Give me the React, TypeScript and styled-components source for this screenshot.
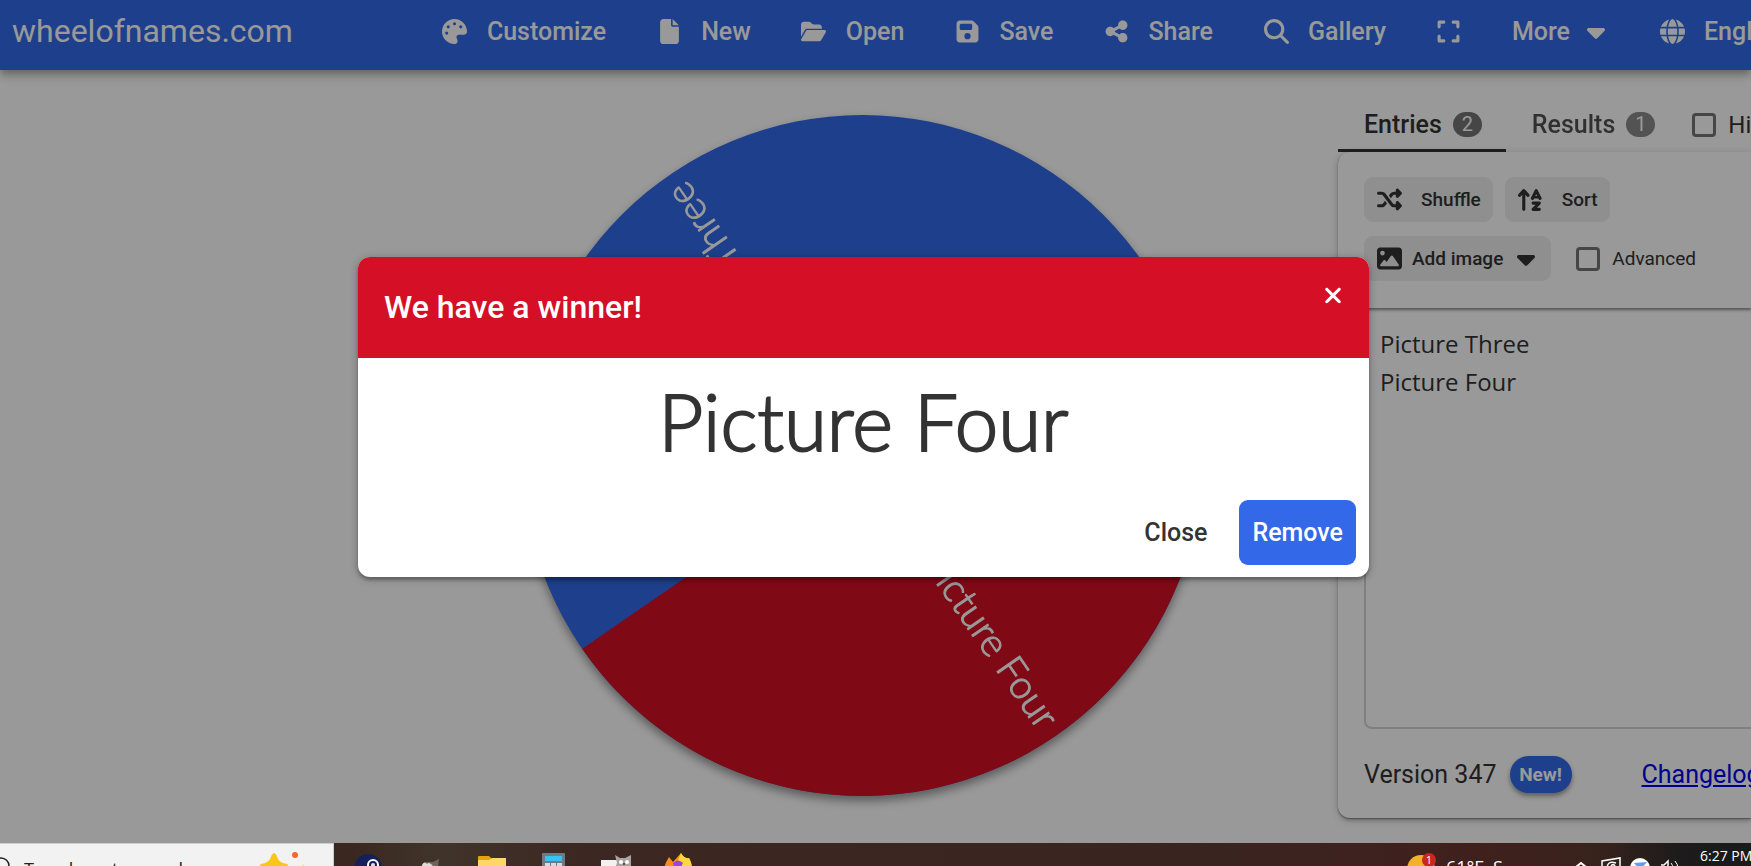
import React from "react";
import styled, { createGlobalStyle } from "styled-components";
import {
  FaPalette, FaFile, FaFolderOpen, FaFloppyDisk, FaShareNodes, FaMagnifyingGlass,
  FaExpand, FaCaretDown, FaGlobe, FaShuffle, FaArrowUpAZ, FaImage, FaXmark,
} from "react-icons/fa6";

const Global = createGlobalStyle`
  *, *::before, *::after { box-sizing: border-box; }
  body { margin: 0; font-family: Roboto, "Liberation Sans", sans-serif; color: #333; background: #fff; }
  button, input, textarea { font: inherit; color: inherit; margin: 0; }
  button { border: 0; background: none; padding: 0; cursor: pointer; white-space: nowrap; }
`;

const Screen = styled.div`
  display: flex;
  flex-direction: column;
  height: 100vh;
  overflow: hidden;
`;

const Page = styled.div`
  position: relative;
  flex: 1;
  min-height: 0;
  display: flex;
  flex-direction: column;
  overflow: hidden;
`;

const Header = styled.header`
  flex: none;
  display: flex;
  align-items: center;
  height: 70px;
  padding: 0 0 8px 12px;
  gap: 124px;
  background: #3369e8;
  color: #fff;
  z-index: 1;
  box-shadow: 0 3px 7px -1px rgba(0, 0, 0, 0.2), 0 6px 8px rgba(0, 0, 0, 0.14), 0 2px 16px rgba(0, 0, 0, 0.12);
`;

const Brand = styled.a`
  flex: none;
  font-size: 32px;
  color: inherit;
  text-decoration: none;
`;

const Nav = styled.nav`
  display: flex;
  flex: none;
`;

const NavButton = styled.button<{ $gap?: number }>`
  display: flex;
  align-items: center;
  gap: ${(p) => p.$gap ?? 19}px;
  padding: 0 25px;
  height: 56px;
  font-size: 25px;
  font-weight: 500;
`;

const IconSlot = styled.span`
  flex: none;
  display: flex;
  align-items: center;
  justify-content: center;
  width: 26px;
  height: 25px;
  svg { flex: none; width: auto; height: 25px; }
`;

const Caret = styled(IconSlot)`
  svg { width: 18px; height: 29px; }
`;

const SortSlot = styled(IconSlot)`
  svg { height: 28px; }
`;

const Main = styled.main`
  flex: 1;
  min-height: 0;
  display: grid;
  grid-template-columns: 389px minmax(0, 1fr) 413px;
`;

const WheelArea = styled.section`
  grid-column: 2;
  display: flex;
  align-items: center;
  justify-content: center;
  min-width: 0;
  padding: 0 2px 2px 0;
`;

const WheelSvg = styled.svg`
  width: 681px;
  height: 681px;
  flex: none;
  overflow: visible;
  filter: drop-shadow(0 5px 5px rgba(0, 0, 0, 0.4));
  text {
    font-family: Lato, sans-serif;
    font-weight: 300;
    font-size: 39px;
    fill: #fff;
    stroke: #fff;
    stroke-width: 1px;
    text-anchor: end;
    dominant-baseline: central;
  }
`;

const Side = styled.aside`
  grid-column: 3;
  display: flex;
  flex-direction: column;
  padding: 27px 0 25px;
  min-height: 0;
`;

const Tabs = styled.div`
  display: flex;
  flex: none;
  height: 55px;
`;

const Tab = styled.button<{ $active?: boolean }>`
  flex: none;
  display: flex;
  align-items: center;
  gap: 11px;
  padding: 2px 24px 0 26px;
  font-size: 25px;
  font-weight: 500;
  border-bottom: 3px solid ${(p) => (p.$active ? "#333" : "transparent")};
  opacity: ${(p) => (p.$active ? 1 : 0.85)};
`;

const Badge = styled.span`
  min-width: 29px;
  height: 25px;
  border-radius: 13px;
  background: #767676;
  color: #fff;
  font-size: 20px;
  line-height: 25px;
  font-weight: 400;
  text-align: center;
`;

const CheckLabel = styled.label<{ $size: number }>`
  flex: none;
  display: flex;
  align-items: center;
  gap: 12px;
  font-size: ${(p) => p.$size}px;
  white-space: nowrap;
  padding-left: 13px;
  input {
    appearance: none;
    width: 24px;
    height: 24px;
    border: 3px solid #757575;
    border-radius: 4px;
  }
`;

const Card = styled.div`
  flex: 1;
  min-height: 0;
  display: flex;
  flex-direction: column;
  border-radius: 12px 0 0 12px;
  box-shadow: 0 2px 8px rgba(0, 0, 0, 0.2), 0 3px 3px rgba(0, 0, 0, 0.14), 0 1px 1px rgba(0, 0, 0, 0.3);
  background: #fff;
`;

const Toolbar = styled.div`
  flex: none;
  display: flex;
  flex-direction: column;
  gap: 14px;
  padding: 25px 26px 27px;
  border-radius: 12px 0 0 0;
  box-shadow: 0 2px 3px rgba(0, 0, 0, 0.45);
  clip-path: inset(0 0 -8px 0);
`;

const ToolRow = styled.div`
  display: flex;
  gap: 12px;
`;

const ToolButton = styled.button<{ $gap: number }>`
  display: flex;
  align-items: center;
  gap: ${(p) => p.$gap}px;
  height: 45px;
  padding: 0 12px;
  border-radius: 9px;
  background: #eee;
  font-size: 19px;
  font-weight: 500;
`;

const Entries = styled.textarea`
  flex: 1;
  min-height: 0;
  margin: 2px 0 0 26px;
  padding: 15px 14px;
  border: 2px solid #d4d4d4;
  border-width: 0 0 2px 2px;
  border-radius: 0 0 0 8px;
  background: transparent;
  resize: none;
  outline: 0;
  font-family: "Open Sans", sans-serif;
  font-size: 24px;
  line-height: 38px;
`;

const Footer = styled.footer`
  flex: none;
  display: flex;
  align-items: center;
  height: 89px;
  padding: 1px 0 0 26px;
  font-size: 25px;
  white-space: nowrap;
  overflow: hidden;
  a { color: #00e; margin-left: 70px; }
`;

const NewPill = styled.button`
  flex: none;
  margin-left: 13px;
  width: 62px;
  height: 37px;
  border-radius: 19px;
  background: #3369e8;
  color: #fff;
  font-size: 19px;
  font-weight: 700;
  box-shadow: 0 3px 5px rgba(0, 0, 0, 0.4);
`;

const Backdrop = styled.div`
  position: absolute;
  inset: 0;
  z-index: 2;
  display: flex;
  align-items: center;
  justify-content: center;
  padding: 0 24px 9px 0;
  background: rgba(0, 0, 0, 0.4);
`;

const Dialog = styled.div`
  width: 1011px;
  max-width: 90%;
  border-radius: 12px;
  overflow: hidden;
  background: #fff;
  box-shadow: 0 2px 8px rgba(0, 0, 0, 0.3), 0 3px 3px rgba(0, 0, 0, 0.2);
`;

const DialogHead = styled.div`
  display: flex;
  align-items: center;
  justify-content: space-between;
  height: 101px;
  padding: 0 26px 2px;
  background: #d50f25;
  color: #fff;
  h2 { margin: 0; font-size: 32px; font-weight: 500; }
  button { align-self: flex-start; display: flex; padding-top: 26px; }
  svg { height: 25px; width: 20px; }
`;

const Winner = styled.div`
  height: 142px;
  padding-top: 13px;
  text-align: center;
  font-family: Lato, sans-serif;
  font-weight: 300;
  font-size: 78px;
  line-height: 100px;
  -webkit-text-stroke: 2px #333;
`;

const DialogActions = styled.div`
  display: flex;
  justify-content: flex-end;
  gap: 14px;
  padding: 0 13px 12px;
`;

const ActionButton = styled.button<{ $primary?: boolean }>`
  height: 65px;
  padding: 0 ${(p) => (p.$primary ? 13 : 18)}px;
  border-radius: 9px;
  font-size: 25px;
  font-weight: 500;
  background: ${(p) => (p.$primary ? "#3369e8" : "transparent")};
  color: ${(p) => (p.$primary ? "#fff" : "#333")};
`;

const Taskbar = styled.div`
  flex: none;
  display: flex;
  align-items: flex-start;
  height: 23px;
  overflow: hidden;
  color: #fff;
  background: linear-gradient(90deg, #3a2720 0, #3a2720 20%, #40342a 25%, #3c2722 33%, #3a2420 70%, #40201d 84%, #38231c 91%, #1d1b1b 96%, #1a1a1a 100%);
`;

const SearchBox = styled.label`
  flex: none;
  display: flex;
  width: 334px;
  height: 62px;
  border: solid #ccc;
  border-width: 1px 1px 0 0;
  background: #f2f2f2;
  color: #222;
  overflow: hidden;
  input {
    width: 200px;
    height: 29px;
    margin-top: 10px;
    padding: 0;
    border: 0;
    background: none;
    font-family: "Open Sans", sans-serif;
    font-size: 18px;
  }
  input::placeholder { color: #222; opacity: 1; }
  svg { flex: none; }
`;

const Pinned = styled.div`
  display: flex;
  margin-left: 3px;
`;

const PinnedApp = styled.button`
  width: 62px;
  display: flex;
  justify-content: center;
`;

const Tray = styled.div`
  display: flex;
  flex: none;
  margin-left: auto;
  font-family: "Open Sans", sans-serif;
  font-size: 16px;
  line-height: 22px;
  white-space: nowrap;
`;

const Weather = styled.span`
  display: flex;
  width: 162px;
  gap: 8px;
  font-size: 18px;
  span { padding-top: 13px; }
`;

const Clock = styled.span`
  width: 51px;
  padding-top: 2px;
  margin-left: 16px;
  font-size: 14px;
`;

const TrayIcons = styled.svg`
  flex: none;
`;

const NAV = [
  { icon: FaPalette, label: "Customize" },
  { icon: FaFile, label: "New" },
  { icon: FaFolderOpen, label: "Open" },
  { icon: FaFloppyDisk, label: "Save" },
  { icon: FaShareNodes, label: "Share" },
  { icon: FaMagnifyingGlass, label: "Gallery" },
];

function Wheel() {
  return (
    <WheelSvg viewBox="-341 -341 682 682" role="img" aria-label="Wheel">
      <circle r="341" fill="#3369e8" />
      <g transform="rotate(55.4)">
        <path d="M0 -341 A341 341 0 0 1 0 341 Z" fill="#d50f25" />
        <text x="328" y="-3">Picture Four</text>
      </g>
      <g transform="rotate(235.4)">
        <text x="328" y="-3">Picture Three</text>
      </g>
      <circle r="60" fill="#fff" />
    </WheelSvg>
  );
}

const APPS = [
  {
    name: "Steam",
    art: (
      <>
        <circle cx="14" cy="25" r="14" fill="#15205a" />
        <circle cx="19" cy="22" r="5" fill="none" stroke="#fff" strokeWidth="2" />
        <circle cx="19" cy="22" r="2" fill="#dde" />
        <path d="M15 24 L8 34" stroke="#fff" strokeWidth="4" />
      </>
    ),
  },
  {
    name: "GIMP",
    art: (
      <>
        <path d="M5 24 L8 19 L17 19 L23 16 L22 24 Z" fill="#68665e" />
        <path d="M6 22 Q8 18 11 21 Q13 18 17 23 L17 25 L6 25Z" fill="#ddd" />
      </>
    ),
  },
  {
    name: "File Explorer",
    art: (
      <>
        <path d="M0 14 Q0 13 1 13 H11 L14 16 V30 H0Z" fill="#e5a50a" />
        <path d="M0 17 H11 L14 15 H28 V32 H0Z" fill="#ffd766" />
      </>
    ),
  },
  {
    name: "Calculator",
    art: (
      <>
        <rect x="2" y="10" width="23" height="24" rx="1" fill="#6f7a84" />
        <rect x="5" y="13" width="17" height="5" fill="#35c4f2" />
        <path d="M5 20h5v6h-5z M11 20h5v6h-5z M17 20h5v6h-5z" fill="#d5dadd" />
      </>
    ),
  },
  {
    name: "Image editor",
    art: (
      <>
        <rect x="-1" y="17" width="22" height="14" fill="#f2f0f0" />
        <path d="M13 12 L18 15 H23 L29 12 V30 H11 L15 20Z" fill="#a8a4a2" />
        <circle cx="19" cy="19" r="2" fill="#fff" />
        <circle cx="25" cy="19" r="2" fill="#fff" />
        <circle cx="22" cy="21" r="1" fill="#5b2b20" />
      </>
    ),
  },
  {
    name: "Firefox",
    art: (
      <>
        <path d="M0 26 Q1 20 5 14 L9 19 L17 10 Q20 16 25 15 Q28 20 28 26Z" fill="#ff8a1e" />
        <path d="M14 17 L17 10 Q20 16 25 15 Q28 20 28 26 H20Z" fill="#ffd83c" />
        <path d="M9 20 Q14 15 19 20 L17 24 H10Z" fill="#9a45e0" />
      </>
    ),
  },
];

export default function App() {
  return (
    <Screen>
      <Global />
      <Page>
        <Header>
          <Brand href="#">wheelofnames.com</Brand>
          <Nav>
            {NAV.map(({ icon: Icon, label }) => (
              <NavButton key={label}>
                <IconSlot><Icon /></IconSlot>
                {label}
              </NavButton>
            ))}
            <NavButton aria-label="Fullscreen">
              <IconSlot><FaExpand /></IconSlot>
            </NavButton>
            <NavButton $gap={13}>
              More
              <Caret><FaCaretDown /></Caret>
            </NavButton>
            <NavButton>
              <IconSlot><FaGlobe /></IconSlot>
              English
            </NavButton>
          </Nav>
        </Header>

        <Main>
          <WheelArea><Wheel /></WheelArea>
          <Side>
            <Tabs>
              <Tab $active>Entries <Badge>2</Badge></Tab>
              <Tab>Results <Badge>1</Badge></Tab>
              <CheckLabel $size={24}>
                <input type="checkbox" />
                Hide
              </CheckLabel>
            </Tabs>
            <Card>
              <Toolbar>
                <ToolRow>
                  <ToolButton $gap={19}><IconSlot><FaShuffle /></IconSlot>Shuffle</ToolButton>
                  <ToolButton $gap={19}><SortSlot><FaArrowUpAZ /></SortSlot>Sort</ToolButton>
                </ToolRow>
                <ToolRow>
                  <ToolButton $gap={10}>
                    <IconSlot><FaImage /></IconSlot>
                    Add image
                    <Caret><FaCaretDown /></Caret>
                  </ToolButton>
                  <CheckLabel $size={19}>
                    <input type="checkbox" />
                    Advanced
                  </CheckLabel>
                </ToolRow>
              </Toolbar>
              <Entries aria-label="Entries" spellCheck={false} defaultValue={"Picture Three\nPicture Four"} />
              <Footer>
                Version 347
                <NewPill>New!</NewPill>
                <a href="#changelog">Changelog</a>
              </Footer>
            </Card>
          </Side>
        </Main>

        <Backdrop>
          <Dialog role="dialog" aria-labelledby="winner-title">
            <DialogHead>
              <h2 id="winner-title">We have a winner!</h2>
              <button aria-label="Dismiss"><FaXmark /></button>
            </DialogHead>
            <Winner>Picture Four</Winner>
            <DialogActions>
              <ActionButton>Close</ActionButton>
              <ActionButton $primary>Remove</ActionButton>
            </DialogActions>
          </Dialog>
        </Backdrop>
      </Page>

      <Taskbar>
        <SearchBox>
          <svg width="24" height="40" viewBox="0 0 24 40" aria-hidden="true">
            <circle cx="1" cy="22" r="8" fill="none" stroke="#222" strokeWidth="1.5" />
          </svg>
          <input type="search" placeholder="Type here to search" />
          <svg width="90" height="40" viewBox="0 0 90 40" aria-hidden="true">
            <path d="M50 9 Q52 9 54 15 Q56 19 63 20 Q66 22 62 27 H38 Q34 22 37 20 Q44 19 46 15 Q48 9 50 9Z" fill="#fbc618" />
            <circle cx="71" cy="11" r="3" fill="#f7682a" />
            <path d="M77 25 L79 20 L81 25Z" fill="#f9d65c" />
          </svg>
        </SearchBox>
        <Pinned>
          {APPS.map((app) => (
            <PinnedApp key={app.name} aria-label={app.name}>
              <svg width="28" height="40" viewBox="0 0 28 40" overflow="visible">{app.art}</svg>
            </PinnedApp>
          ))}
        </Pinned>
        <Tray>
          <Weather>
            <svg width="30" height="40" viewBox="0 0 30 40" overflow="visible" aria-label="1 alert">
              <circle cx="13" cy="26" r="14" fill="#f5b02c" />
              <circle cx="21" cy="17" r="7" fill="#c8281e" />
              <text x="21" y="21" fontSize="11" fill="#fff" textAnchor="middle">1</text>
            </svg>
            <span>61°F&nbsp; S</span>
          </Weather>
          <TrayIcons width="114" height="40" viewBox="0 0 114 40" aria-hidden="true">
            <path d="M6 24 L11 20 L16 24" fill="none" stroke="#fff" strokeWidth="2" />
            <path d="M32 30 V18 L50 15 V30" fill="none" stroke="#fff" strokeWidth="1.5" />
            <path d="M46 20 Q37 17 37 26 M41 23 Q44 19 46 26" fill="none" stroke="#fff" strokeWidth="1.5" />
            <circle cx="70" cy="25" r="10" fill="#fff" />
            <path d="M64 20 L77 19 L70 27Z" fill="#5aa0f0" />
            <path d="M91 22 H94 L98 18 V28" fill="none" stroke="#fff" strokeWidth="1.5" />
            <path d="M101 20 Q103 22 103 26 M105 18 Q108 21 108 26" fill="none" stroke="#fff" strokeWidth="1" />
          </TrayIcons>
          <Clock>6:27 PM</Clock>
        </Tray>
      </Taskbar>
    </Screen>
  );
}
